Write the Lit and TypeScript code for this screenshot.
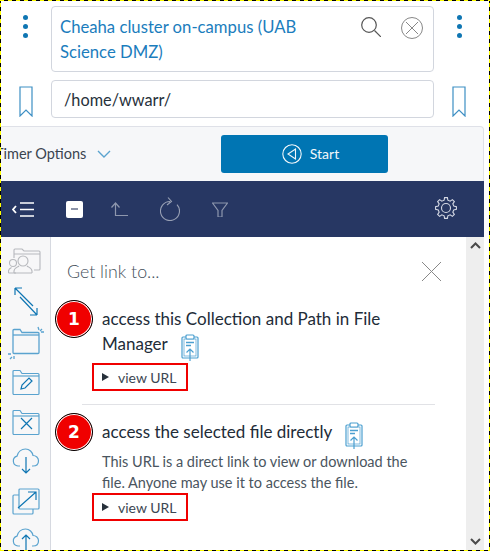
import { LitElement, html, css, svg } from 'lit';
import { customElement } from 'lit/decorators.js';

const BLUE = '#0f76b3';
const LIGHT = '#5aa3cf';

const icon = (color: string, body: unknown, w = 22, h = 22, sw = 1.2) => html`
  <svg width=${w} height=${h} viewBox="0 0 ${w} ${h}" fill="none" stroke=${color} stroke-width=${sw}>${body}</svg>
`;

// gear outline, one tooth every 45 degrees
const gearPath = (cx: number, cy: number, inner: number, outer: number, teeth: number) => {
  const pts: string[] = [];
  const step = (Math.PI * 2) / teeth;
  for (let i = 0; i < teeth; i++) {
    const a = i * step - Math.PI / 2;
    const at = (r: number, d: number) =>
      `${(cx + r * Math.cos(a + d * step)).toFixed(2)} ${(cy + r * Math.sin(a + d * step)).toFixed(2)}`;
    pts.push(at(inner, -0.3), at(outer, -0.17), at(outer, 0.17), at(inner, 0.3));
  }
  return `M${pts.join('L')}Z`;
};

const bookmark = icon('#3d8fc4', svg`<path d="M1 1h12v29l-6-6-6 6z" />`, 14, 31, 1.2);

const clipboard = html`<svg class="clip" width="18" height="27" viewBox="0 0 18 27" fill="none" stroke="#4b9fd0" stroke-width="1.2">
  <rect x="1" y="3" width="16" height="21" rx="1" />
  <rect x="3" y="5" width="12" height="17" stroke-width="0.7" />
  <rect x="5" y="1" width="8" height="4" rx="1" fill="#fff" />
  <path d="M5 8.500h8M5 11.500h5" stroke-width="1.6" />
  <path d="M9 27V15M5.500 18.500 9 15l3.500 3.500" fill="#fff" />
</svg>`;

const folderPath = svg`<path d="M1 6V2.500a1 1 0 0 1 1-1h6l2 3h16a1 1 0 0 1 1 1v19a1 1 0 0 1-1 1H2a1 1 0 0 1-1-1z" /><path d="M1 7h26" />`;

const cloud = svg`<path d="M8 19H6a5 5 0 0 1-1-9.800C6 5 9.500 2 13.500 2c4 0 7 3 7.500 6.500 3 0 5.500 2.200 5.500 5.200S24.500 19 21 19h-1" />`;

@customElement('app-root')
export class AppRoot extends LitElement {
  static styles = css`
    :host {
      display: block;
      width: 490px;
      height: 551px;
      overflow: hidden;
      background: #fff;
      font-family: 'Lato', 'Open Sans', sans-serif;
      color: #27313b;
      position: relative;
    }
    .edge {
      position: absolute;
      inset: 0;
      pointer-events: none;
      z-index: 5;
      background:
        repeating-linear-gradient(90deg, #ffff00 0 4px, #000 4px 8px) top / 100% 1px no-repeat,
        repeating-linear-gradient(90deg, #ffff00 0 4px, #000 4px 8px) bottom / 100% 1px no-repeat,
        repeating-linear-gradient(0deg, #ffff00 0 4px, #000 4px 8px) left / 1px 100% no-repeat,
        repeating-linear-gradient(0deg, #ffff00 0 4px, #000 4px 8px) right / 1px 100% no-repeat;
    }
    .frame {
      width: 484px;
      height: 551px;
      display: flex;
      flex-direction: column;
    }
    .top {
      display: grid;
      grid-template-columns: 51px 383px 50px;
      grid-template-rows: 66px 38px;
      row-gap: 8px;
      padding-top: 6px;
      height: 126px;
      box-sizing: border-box;
      align-items: start;
    }
    .kebab {
      display: flex;
      flex-direction: column;
      gap: 4px;
      align-items: center;
      padding-top: 9px;
    }
    .kebab i {
      width: 5px;
      height: 5px;
      border-radius: 50%;
      background: #0f76b3;
    }
    .box {
      border: 1px solid #d2d6de;
      border-radius: 4px;
      box-sizing: border-box;
      background: #fff;
    }
    .site {
      height: 66px;
      padding: 8px 10px 0 8px;
      display: flex;
      color: #1b7dbd;
      font-size: 16.7px;
      line-height: 25px;
    }
    .site span {
      width: 262px;
    }
    .tools {
      margin-left: auto;
      display: flex;
      gap: 20px;
      padding-top: 2px;
    }
    .path {
      height: 38px;
      display: flex;
      align-items: center;
      padding-left: 12px;
      font-size: 16.3px;
    }
    .mark {
      display: flex;
      justify-content: center;
      padding-top: 6px;
    }
    .bar {
      height: 55px;
      background: #f6f7f9;
      border-top: 1px solid #dfe1e8;
      border-right: 1px solid #dfe1e8;
      border-top-right-radius: 4px;
      box-sizing: border-box;
      display: flex;
      align-items: center;
      overflow: hidden;
    }
    .timer {
      margin-left: -5px;
      width: 226px;
      font-size: 14.5px;
      display: flex;
      align-items: center;
      gap: 11px;
      color: #3a4450;
    }
    .timer span,
    .start span {
      padding-bottom: 2px;
    }
    .start {
      width: 167px;
      height: 38px;
      background: #0075b3;
      border-radius: 3px;
      color: #f2f7fa;
      font-size: 14px;
      display: flex;
      align-items: center;
      justify-content: center;
      gap: 8px;
      padding-left: 12px;
      box-sizing: border-box;
    }
    .nav {
      height: 56px;
      background: #273763;
      display: flex;
      align-items: center;
      padding: 0 27px 0 12px;
      gap: 32px;
    }
    .nav .gear {
      margin-left: auto;
    }
    .checkbox {
      width: 17px;
      height: 17px;
      margin-right: -4px;
      background: #fff;
      border-radius: 2px;
      display: flex;
      align-items: center;
      justify-content: center;
    }
    .checkbox i {
      width: 7px;
      height: 2px;
      background: #8b93a8;
    }
    .main {
      flex: 1;
      display: flex;
      min-height: 0;
    }
    .rail {
      width: 51px;
      flex: none;
      background: #f7f7f8;
      border-right: 1px solid #d6d9e0;
      box-sizing: border-box;
      display: flex;
      flex-direction: column;
      align-items: center;
      gap: 9px;
      padding: 11px 0 0 2px;
      overflow: hidden;
    }
    .rail svg {
      flex: none;
    }
    .panel {
      flex: 1;
      padding: 23px 31px 0 16px;
    }
    .panel h2 {
      margin: 0 -7px 18px 0;
      font-size: 17.8px;
      font-weight: 300;
      color: #45505b;
      display: flex;
      justify-content: space-between;
      align-items: center;
      height: 22px;
    }
    .item {
      display: grid;
      grid-template-columns: 35px 1fr;
    }
    .num {
      width: 38px;
      height: 38px;
      margin-left: -12px;
      box-sizing: border-box;
      border-radius: 50%;
      background: #f00000;
      border: 1px solid #000;
      box-shadow: inset 0 0 0 1px #fff;
      color: #fff;
      font: 700 17px 'DejaVu Sans', sans-serif;
      display: flex;
      align-items: center;
      justify-content: center;
    }
    .body {
      padding-top: 6px;
    }
    .title {
      font-size: 17px;
      line-height: 25px;
      color: #222c38;
      margin: 0 0 7px;
      max-width: 290px;
    }
    .clip {
      vertical-align: middle;
      margin: -8px 0 -12px 9px;
    }
    .view {
      grid-column: 2;
      width: 96px;
      height: 28px;
      box-sizing: border-box;
      margin-left: -10px;
      border: 2px solid #f00000;
      display: flex;
      align-items: center;
      gap: 9px;
      padding-left: 8px;
      font-size: 14px;
      color: #3c4652;
    }
    .view i {
      width: 0;
      height: 0;
      border-left: 7px solid #27313b;
      border-top: 4px solid transparent;
      border-bottom: 4px solid transparent;
    }
    hr {
      border: 0;
      border-top: 1px solid #e1e2e6;
      margin: 13px 0 8px 15px;
    }
    .desc {
      font-size: 14.5px;
      line-height: 21px;
      color: #4a5560;
      margin: 0;
      max-width: 320px;
    }
    .scroll {
      width: 18px;
      flex: none;
      background: #eeeeee;
      display: flex;
      flex-direction: column;
      justify-content: space-between;
      align-items: center;
      padding: 5px 0 6px;
      box-sizing: border-box;
    }
  `;

  render() {
    return html`
      <div class="frame">
        <div class="top">
          <div class="kebab"><i></i><i></i><i></i></div>
          <div class="box site">
            <span>Cheaha cluster on-campus (UAB Science DMZ)</span>
            <div class="tools">
              ${icon('#555', svg`<circle cx="8" cy="8" r="7.300" /><path d="M13.500 13.500 20 20" />`, 20, 20, 1.2)}
              ${icon('#888', svg`<circle cx="11" cy="11" r="10.500" /><path d="M5 5l12 12M17 5 5 17" />`, 22, 22, 1)}
            </div>
          </div>
          <div class="kebab"><i></i><i></i><i></i></div>
          <div class="mark">${bookmark}</div>
          <div class="box path">/home/wwarr/</div>
          <div class="mark">${bookmark}</div>
        </div>
        <div class="bar">
          <div class="timer">
            <span>Timer Options</span>
            ${icon(LIGHT, svg`<path d="M1 1l6 6 6-6" />`, 14, 8, 1.4)}
          </div>
          <div class="start">
            ${icon('#f2f7fa', svg`<circle cx="10" cy="10" r="9.200" /><path d="M13.500 5v10L6 10z" />`, 20, 20, 1.1)}
            <span>Start</span>
          </div>
        </div>
        <div class="nav">
          ${icon('#fff', svg`<path d="M4 4 1 7.500 4 11" stroke-width="1.800" /><path d="M8 1h14M8 7.500h14M8 14h14" stroke-width="1.500" />`, 22, 15, 1.5)}
          <div class="checkbox"><i></i></div>
          ${icon('#8e97ae', svg`<path d="M.5 5.500 4.500 1l4 4.500M4.500 1v12.500H17" />`, 17, 14, 1.2)}
          ${icon('#98a0b4', svg`<path d="M10 4.500A9.500 9.500 0 1 0 17 7.600M8 .5 11.500 4.500 7 8" />`, 20, 24, 1.1)}
          ${icon('#8e97ae', svg`<path d="M.5 1h15L10 8.500V15H6V8.500z" />`, 16, 15, 1.2)}
          <div class="gear">
            ${icon('#d6dae5', svg`<path d=${gearPath(11, 11, 8, 10.5, 8)} /><circle cx="11" cy="11" r="4.500" />`, 22, 22, 1.1)}
          </div>
        </div>
        <div class="main">
          <div class="rail">
            ${icon('#b7b9bd', svg`
              <path d="M6 10V2a1 1 0 0 1 1-1h7l2 2h15a1 1 0 0 1 1 1v17a1 1 0 0 1-1 1h-5M6 6h26" />
              <circle cx="5" cy="15" r="3.500" fill="#f7f7f8" />
              <path d="M.5 25v-2c0-2 2-3 3-3.500M8 25H.5" />
              <circle cx="15" cy="13" r="5" fill="#f7f7f8" />
              <path d="M6 25v-2c0-3 4-4 5-5M24 25v-2c0-3-4-4-5-5M6 25h18" />
            `, 36, 30, 1.1)}
            ${icon(BLUE, svg`<path d="M7 1l18 18M7 1h7M7 1v7M12 10l17 18M29 28h-7M29 28v-7" />`, 36, 30, 1.2)}
            ${icon(LIGHT, svg`
              <g transform="translate(4 2)">${folderPath}</g>
              <path d="M30 1l1 3M34 3l-2 2M36 6h-3M0 28h3M2 33l2-2M6 33v-3" />
            `, 36, 34, 1.3)}
            ${icon(LIGHT, svg`
              <g transform="translate(4 0)">${folderPath}</g>
              <path d="M13 20l1-4 7-7 3 3-7 7z" stroke=${BLUE} />
            `, 36, 31, 1.2)}
            ${icon(LIGHT, svg`
              <g transform="translate(4 0)">${folderPath}</g>
              <path d="M13 9l11 11M24 9 13 20" stroke=${BLUE} />
            `, 36, 30, 1.2)}
            ${icon(LIGHT, svg`
              <g transform="translate(4 -1)">${cloud}</g>
              <path d="M18 9v16M14 21l4 4 4-4" stroke=${BLUE} />
            `, 36, 31, 1.2)}
            ${icon(LIGHT, svg`
              <rect x="11" y="1" width="20" height="20" rx="1" />
              <path d="M11 7H6a1 1 0 0 0-1 1v17a1 1 0 0 0 1 1h18a1 1 0 0 0 1-1v-4" />
              <path d="M10 20 28 4M20 4h8v8" stroke=${BLUE} />
            `, 36, 31, 1.2)}
            ${icon(LIGHT, svg`
              <g transform="translate(4 -1)">${cloud}</g>
              <path d="M18 30V7M14 11l4-4 4 4" stroke=${BLUE} />
            `, 36, 31, 1.2)}
          </div>
          <div class="panel">
            <h2>
              <span>Get link to...</span>
              ${icon('#888', svg`<path d="M1 1l19 19M20 1 1 20" />`, 21, 21, 1)}
            </h2>
            <div class="item">
              <div class="num">1</div>
              <div class="body">
                <p class="title">access this Collection and Path in File Manager ${clipboard}</p>
              </div>
              <div class="view"><i></i>view URL</div>
            </div>
            <hr />
            <div class="item">
              <div class="num">2</div>
              <div class="body">
                <p class="title">access the selected file directly ${clipboard}</p>
                <p class="desc">This URL is a direct link to view or download the file. Anyone may use it to access the file.</p>
              </div>
              <div class="view"><i></i>view URL</div>
            </div>
          </div>
          <div class="scroll">
            ${icon('#4a4a4a', svg`<path d="M1 6l4.500-4.500L10 6" />`, 11, 7, 2)}
            ${icon('#4a4a4a', svg`<path d="M1 1l4.500 4.500L10 1" />`, 11, 7, 2)}
          </div>
        </div>
      </div>
      <div class="edge"></div>
    `;
  }
}
